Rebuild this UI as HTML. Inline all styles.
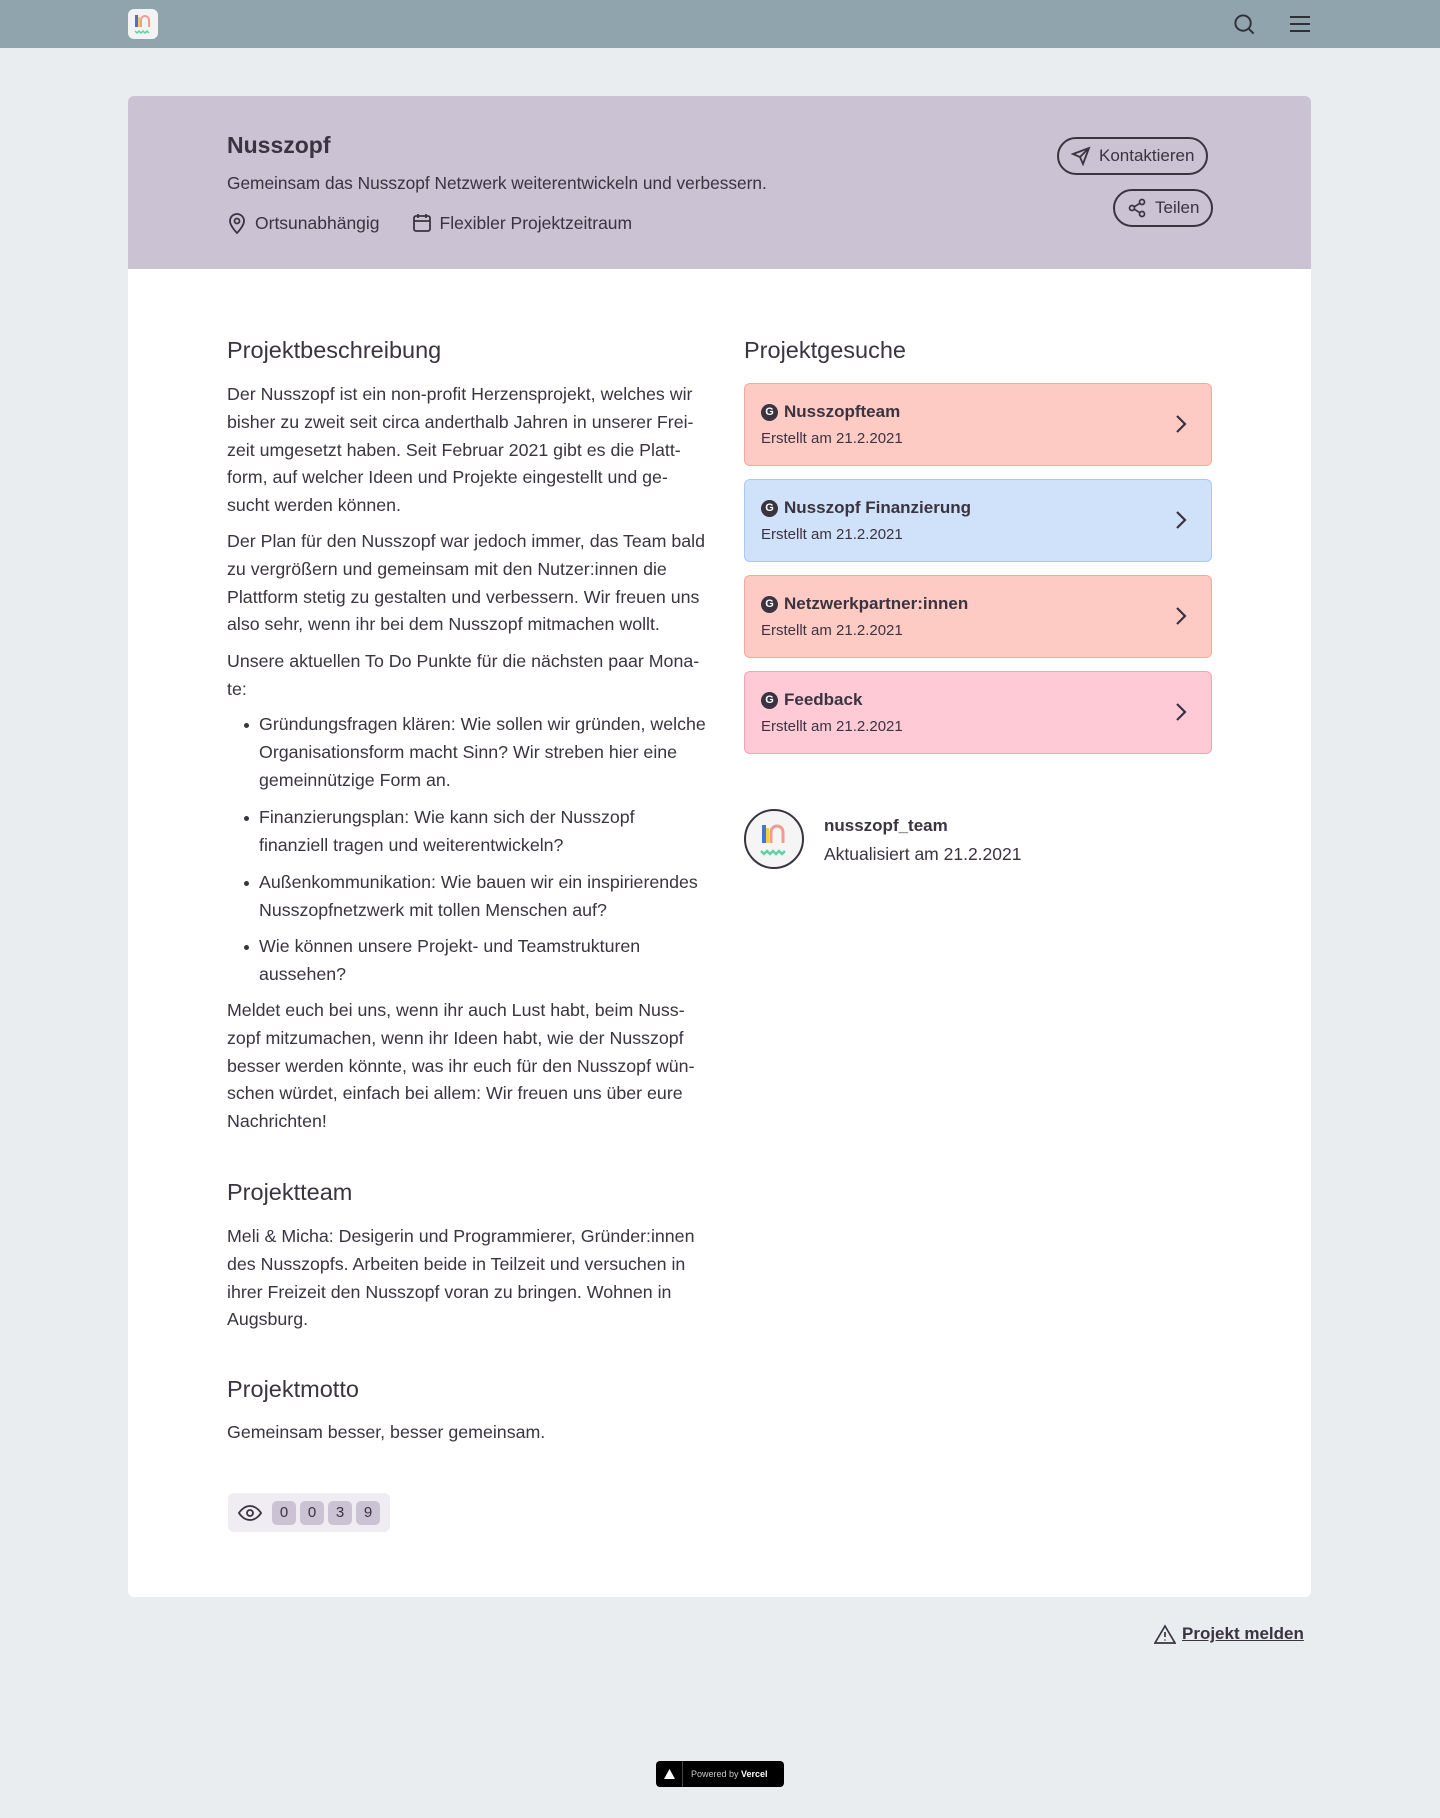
<!DOCTYPE html>
<html><head><meta charset="utf-8"><style>
*{box-sizing:border-box;margin:0;padding:0}
body{width:1440px;height:1818px;background:#e9edf0;font-family:"Liberation Sans",sans-serif;color:#3a3340;position:relative;overflow:hidden}
.top{position:absolute;left:0;top:0;width:1440px;height:48px;background:#8fa4ad}
.card{position:absolute;left:128px;top:96px;width:1183px;height:1501px;background:#fff;border-radius:6px;overflow:hidden}
.hero{position:absolute;left:0;top:0;width:100%;height:173px;background:#cbc2d3}
.a{position:absolute;white-space:nowrap}
h2{font-size:23.5px;font-weight:500;color:#3a3340;position:absolute;white-space:nowrap;line-height:30px}
.p{position:absolute;left:99px;font-size:17.8px;line-height:27.8px;white-space:nowrap}
.li{position:absolute;left:131px;font-size:17.8px;line-height:27.8px;white-space:nowrap}
.li:before{content:"";position:absolute;left:-15px;top:12px;width:5px;height:5px;border-radius:50%;background:#3a3340}
.btn{position:absolute;border:2px solid #3a3340;border-radius:20px;height:38px;font-size:17px;display:flex;align-items:center;gap:8px;padding:0 12px}
.g{position:absolute;left:616px;width:468px;height:83px;border-radius:6px;border:1px solid}
.g .t{position:absolute;left:16px;top:18px;font-size:17px;font-weight:bold;display:flex;align-items:center;gap:6px}
.g .t i{display:inline-block;width:17px;height:17px;border-radius:50%;background:#3a3340;color:#fff;font-style:normal;font-size:11px;text-align:center;line-height:17px}
.g .s{position:absolute;left:16px;top:46px;font-size:15px}
.g svg{position:absolute;right:24px;top:30px}
.num{display:inline-block;width:24px;height:24px;background:#cbc2d3;border-radius:5px;text-align:center;line-height:24px;font-size:15px;margin-right:4px}
</style></head><body>
<div class="top">
 <div class="a" style="left:128px;top:9px;width:30px;height:30px;background:#f3f3f3;border-radius:6px">
  <svg width="30" height="30" viewBox="0 0 30 30"><rect x="7" y="6" width="3" height="12" fill="#4a6fd8"/><rect x="10" y="8" width="2" height="10" fill="#f2d03b"/><path d="M13 18V11a4 4 0 0 1 8 0v7" stroke="#f29b8f" stroke-width="2" fill="none"/><path d="M7 22l2 2 2-2 2 2 2-2 2 2 2-2 2 2" stroke="#5fd3a5" stroke-width="1.5" fill="none"/></svg>
 </div>
 <svg class="a" style="left:1233px;top:13px" width="23" height="23" viewBox="0 0 24 24" fill="none" stroke="#2f2f38" stroke-width="2"><circle cx="10.5" cy="10.5" r="8"/><path d="M16.5 16.5l5 5"/></svg>
 <svg class="a" style="left:1289px;top:14px" width="22" height="20" viewBox="0 0 22 20" stroke="#2f2f38" stroke-width="2"><path d="M1 3h20M1 10h20M1 17h20"/></svg>
</div>
<div class="card">
 <div class="hero">
  <div class="a" style="left:99px;top:36px;font-size:23px;font-weight:600">Nusszopf</div>
  <div class="a" style="left:99px;top:77px;font-size:17.3px">Gemeinsam das Nusszopf Netzwerk weiterentwickeln und verbessern.</div>
  <div class="a" style="left:99px;top:116px;font-size:17.5px;display:flex;align-items:center;gap:8px">
   <svg width="20" height="22" viewBox="0 0 20 22" fill="none" stroke="#3a3340" stroke-width="1.8"><path d="M10 21s-7-7-7-12a7 7 0 0 1 14 0c0 5-7 12-7 12z"/><circle cx="10" cy="9" r="2.5"/></svg>Ortsunabhängig
   <svg style="margin-left:24px" width="20" height="20" viewBox="0 0 20 20" fill="none" stroke="#3a3340" stroke-width="1.8"><rect x="2" y="3" width="16" height="15" rx="2"/><path d="M2 8h16M6 1v4M14 1v4"/></svg>Flexibler Projektzeitraum
  </div>
  <div class="btn" style="left:929px;top:41px"><svg width="20" height="20" viewBox="0 0 20 20" fill="none" stroke="#3a3340" stroke-width="1.8"><path d="M18 2L9 11M18 2l-6 16-3-7-7-3z"/></svg>Kontaktieren</div>
  <div class="btn" style="left:985px;top:93px"><svg width="20" height="20" viewBox="0 0 20 20" fill="none" stroke="#3a3340" stroke-width="1.7"><circle cx="15" cy="4" r="2.5"/><circle cx="5" cy="10" r="2.5"/><circle cx="15" cy="16" r="2.5"/><path d="M7.2 8.8l5.6-3.5M7.2 11.2l5.6 3.5"/></svg>Teilen</div>
 </div>

 <h2 style="left:99px;top:239px">Projektbeschreibung</h2>
 <div class="p" style="top:285px">Der Nusszopf ist ein non-profit Herzensprojekt, welches wir<br>bisher zu zweit seit circa anderthalb Jahren in unserer Frei-<br>zeit umgesetzt haben. Seit Februar 2021 gibt es die Platt-<br>form, auf welcher Ideen und Projekte eingestellt und ge-<br>sucht werden können.</div>
 <div class="p" style="top:432px">Der Plan für den Nusszopf war jedoch immer, das Team bald<br>zu vergrößern und gemeinsam mit den Nutzer:innen die<br>Plattform stetig zu gestalten und verbessern. Wir freuen uns<br>also sehr, wenn ihr bei dem Nusszopf mitmachen wollt.</div>
 <div class="p" style="top:552px">Unsere aktuellen To Do Punkte für die nächsten paar Mona-<br>te:</div>
 <div class="li" style="top:615px">Gründungsfragen klären: Wie sollen wir gründen, welche<br>Organisationsform macht Sinn? Wir streben hier eine<br>gemeinnützige Form an.</div>
 <div class="li" style="top:708px">Finanzierungsplan: Wie kann sich der Nusszopf<br>finanziell tragen und weiterentwickeln?</div>
 <div class="li" style="top:773px">Außenkommunikation: Wie bauen wir ein inspirierendes<br>Nusszopfnetzwerk mit tollen Menschen auf?</div>
 <div class="li" style="top:837px">Wie können unsere Projekt- und Teamstrukturen<br>aussehen?</div>
 <div class="p" style="top:901px">Meldet euch bei uns, wenn ihr auch Lust habt, beim Nuss-<br>zopf mitzumachen, wenn ihr Ideen habt, wie der Nusszopf<br>besser werden könnte, was ihr euch für den Nusszopf wün-<br>schen würdet, einfach bei allem: Wir freuen uns über eure<br>Nachrichten!</div>

 <h2 style="left:99px;top:1081px">Projektteam</h2>
 <div class="p" style="top:1127px">Meli &amp; Micha: Desigerin und Programmierer, Gründer:innen<br>des Nusszopfs. Arbeiten beide in Teilzeit und versuchen in<br>ihrer Freizeit den Nusszopf voran zu bringen. Wohnen in<br>Augsburg.</div>
 <h2 style="left:99px;top:1278px">Projektmotto</h2>
 <div class="p" style="top:1323px">Gemeinsam besser, besser gemeinsam.</div>

 <div class="a" style="left:100px;top:1397px;width:162px;height:39px;background:#efecf2;border-radius:6px;display:flex;align-items:center;padding-left:10px">
  <svg width="24" height="16" viewBox="0 0 24 16" fill="none" stroke="#3a3340" stroke-width="1.8" style="margin-right:10px"><path d="M1 8s4-7 11-7 11 7 11 7-4 7-11 7S1 8 1 8z"/><circle cx="12" cy="8" r="3"/></svg>
  <span class="num">0</span><span class="num">0</span><span class="num">3</span><span class="num">9</span>
 </div>

 <h2 style="left:616px;top:239px">Projektgesuche</h2>
 <div class="g" style="top:287px;background:#fecbc4;border-color:#f7a89c"><div class="t"><i>G</i>Nusszopfteam</div><div class="s">Erstellt am 21.2.2021</div><svg width="12" height="20" viewBox="0 0 12 20" fill="none" stroke="#3a3340" stroke-width="2.2"><path d="M2 2l8 8-8 8"/></svg></div>
 <div class="g" style="top:383px;background:#d0e1fa;border-color:#a8c8f5"><div class="t"><i>G</i>Nusszopf Finanzierung</div><div class="s">Erstellt am 21.2.2021</div><svg width="12" height="20" viewBox="0 0 12 20" fill="none" stroke="#3a3340" stroke-width="2.2"><path d="M2 2l8 8-8 8"/></svg></div>
 <div class="g" style="top:479px;background:#fecbc4;border-color:#f7a89c"><div class="t"><i>G</i>Netzwerkpartner:innen</div><div class="s">Erstellt am 21.2.2021</div><svg width="12" height="20" viewBox="0 0 12 20" fill="none" stroke="#3a3340" stroke-width="2.2"><path d="M2 2l8 8-8 8"/></svg></div>
 <div class="g" style="top:575px;background:#fdcad6;border-color:#f6a2b5"><div class="t"><i>G</i>Feedback</div><div class="s">Erstellt am 21.2.2021</div><svg width="12" height="20" viewBox="0 0 12 20" fill="none" stroke="#3a3340" stroke-width="2.2"><path d="M2 2l8 8-8 8"/></svg></div>

 <div class="a" style="left:616px;top:713px;width:60px;height:60px;border:2px solid #3a3340;border-radius:50%;background:#f5f5f5">
  <svg width="56" height="56" viewBox="0 0 56 56"><rect x="16" y="14" width="4" height="18" fill="#4a6fd8"/><rect x="20" y="17" width="3" height="15" fill="#f2d03b"/><path d="M25 32V21a6 6 0 0 1 12 0v11" stroke="#f29b8f" stroke-width="3" fill="none"/><path d="M15 40l3 3 3-3 3 3 3-3 3 3 3-3 3 3 3-3" stroke="#5fd3a5" stroke-width="2.5" fill="none"/></svg>
 </div>
 <div class="a" style="left:696px;top:720px;font-size:17px;font-weight:bold">nusszopf_team</div>
 <div class="a" style="left:696px;top:748px;font-size:17.5px">Aktualisiert am 21.2.2021</div>
</div>

<div class="a" style="left:1154px;top:1624px;font-size:17px;display:flex;align-items:center;gap:6px">
 <svg width="22" height="20" viewBox="0 0 22 20" fill="none" stroke="#3a3340" stroke-width="1.7"><path d="M11 2L1 19h20z"/><path d="M11 8v5M11 15.5v1"/></svg><span style="text-decoration:underline;font-weight:bold">Projekt melden</span>
</div>
<div class="a" style="left:656px;top:1761px;width:128px;height:26px;background:#000;border-radius:4px;color:#fff;font-size:9px;display:flex;align-items:center">
 <div style="width:27px;height:26px;border-right:1px solid #444;display:flex;align-items:center;justify-content:center"><svg width="11" height="10" viewBox="0 0 11 10"><path d="M5.5 0L11 10H0z" fill="#fff"/></svg></div>
 <span style="margin-left:8px;color:#ccc">Powered by <b style="color:#fff">Vercel</b></span>
</div>
</body></html>
